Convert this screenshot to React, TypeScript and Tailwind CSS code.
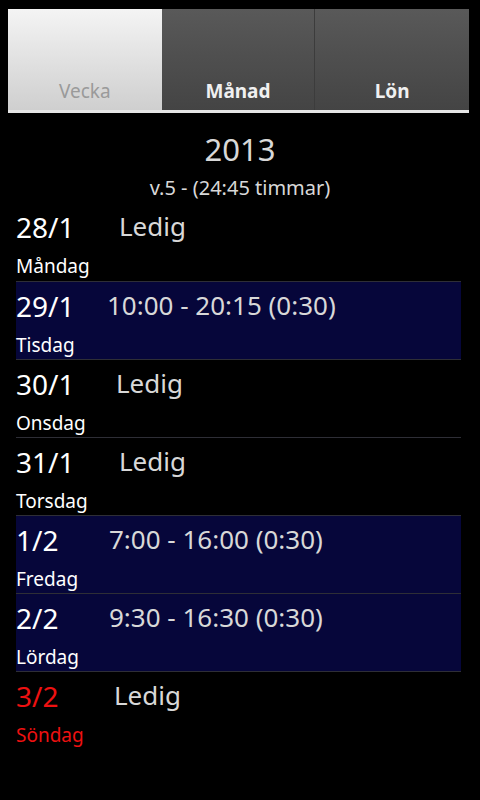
import React from 'react';

type Day = {
  date: string;
  name: string;
  text: string;
  work: boolean;
  sunday?: boolean;
  indent: string;
};

// indent = where the second column starts, counted after the 60px date column
const days: Day[] = [
  { date: '28/1', name: 'Måndag', text: 'Ledig', work: false, indent: 'ml-[43px]' },
  { date: '29/1', name: 'Tisdag', text: '10:00 - 20:15 (0:30)', work: true, indent: 'ml-[31px]' },
  { date: '30/1', name: 'Onsdag', text: 'Ledig', work: false, indent: 'ml-[40px]' },
  { date: '31/1', name: 'Torsdag', text: 'Ledig', work: false, indent: 'ml-[43px]' },
  { date: '1/2', name: 'Fredag', text: '7:00 - 16:00 (0:30)', work: true, indent: 'ml-[33px]' },
  { date: '2/2', name: 'Lördag', text: '9:30 - 16:30 (0:30)', work: true, indent: 'ml-[33px]' },
  { date: '3/2', name: 'Söndag', text: 'Ledig', work: false, sunday: true, indent: 'ml-[38px]' },
];

const Tabs: React.FC = () => (
  <div className="pt-[9px] pl-[8px] pr-[11px]">
    <div className="grid grid-cols-3 h-[101px]">
      <div className="flex items-end justify-center pb-[5px] bg-gradient-to-b from-[#f4f4f4] to-[#cfcfcf] text-[#9a9a9a] text-[19px]">
        Vecka
      </div>
      <div className="flex items-end justify-center pb-[5px] bg-gradient-to-b from-[#595959] to-[#444444] text-[#f0f0f0] font-bold text-[19px] border-r border-[#3c3c3c]">
        Månad
      </div>
      <div className="flex items-end justify-center pb-[5px] bg-gradient-to-b from-[#595959] to-[#444444] text-[#f0f0f0] font-bold text-[19px]">
        Lön
      </div>
    </div>
    <div className="h-[3px] bg-[#e6e6e6]" />
  </div>
);

const DayRow: React.FC<{ day: Day; first: boolean }> = ({ day, first }) => {
  const dateColor = day.sunday ? 'text-[#ee1111]' : 'text-white';
  return (
    <div
      className={`h-[78px] flex flex-col ${first ? '' : 'border-t border-[#2e2e36]'} ${
        day.work ? 'bg-[#06063a]' : 'bg-black'
      }`}
    >
      <div className="flex items-start h-[51px] pt-[6px]">
        <span className={`text-[28px] leading-[36px] w-[60px] ${dateColor}`}>{day.date}</span>
        <span className={`text-[26px] leading-[34px] text-[#d8d8d8] ${day.indent}`}>{day.text}</span>
      </div>
      <div className={`text-[19px] leading-[24px] ${dateColor}`}>{day.name}</div>
    </div>
  );
};

export default function App() {
  return (
    <div
      className="w-[480px] h-[800px] bg-black overflow-hidden"
      style={{ fontFamily: '"Noto Sans", "Open Sans", sans-serif' }}
    >
      <Tabs />
      <div className="flex flex-col items-center pt-[17px] text-[#d8d8d8]">
        <div className="text-[31px] leading-[38px]">2013</div>
        <div className="text-[20px] leading-[26px] mt-[7px]">v.5 - (24:45 timmar)</div>
      </div>
      <div className="ml-[16px] mr-[19px] mt-[2px]">
        {days.map((d, i) => (
          <DayRow key={d.date} day={d} first={i === 0} />
        ))}
      </div>
    </div>
  );
}
